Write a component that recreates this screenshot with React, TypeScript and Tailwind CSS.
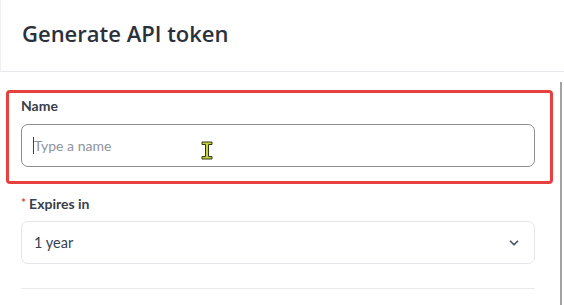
import React from 'react';

const titleFont = { fontFamily: '"Open Sans", "Noto Sans", sans-serif' };
const bodyFont = { fontFamily: 'Lato, "Open Sans", sans-serif' };

const Chevron: React.FC = () => (
  <svg width="14" height="14" viewBox="0 0 24 24" fill="none" stroke="#4b5563" strokeWidth="3" strokeLinecap="round" strokeLinejoin="round">
    <path d="M6 9l6 6 6-6" />
  </svg>
);

const IBeam: React.FC = () => (
  <svg width="12" height="19" viewBox="0 0 12 19">
    <path d="M1 1h10v2.5H7.5v12H11V18H1v-2.5h3.5v-12H1z" fill="#c5cf3f" stroke="#2f3a12" strokeWidth="1" strokeLinejoin="round" />
  </svg>
);

export default function App() {
  return (
    <div className="relative w-[564px] h-[305px] overflow-hidden bg-white text-[#374151]" style={bodyFont}>
      <div className="h-[72px] flex items-center px-[21px] border-b border-[#e5e7eb] border-l border-l-[#f1f1f1]">
        <h1 className="text-[22px] font-semibold text-[#2b313b] -mt-[4px]" style={titleFont}>Generate API token</h1>
      </div>

      <div className="flex h-[233px]">
        <div className="flex-1 pl-[21px] pr-[25px] pt-[24px] flex flex-col">
          <label className="text-[14px] leading-[20px] font-bold text-[#3a404a]">Name</label>
          <div className="relative mt-[8px] h-[43px] rounded-[7px] border border-[#8c8c8c] flex items-center pl-[11px]">
            <span className="w-px h-[17px] bg-[#444]" />
            <span className="text-[14px] text-[#8e949c]">Type a name</span>
            <div className="absolute left-[179px] top-[16px]">
              <IBeam />
            </div>
          </div>

          <label className="mt-[26px] text-[14px] leading-[20px] font-bold text-[#3a404a]">
            <span className="text-[#dc4d2c] text-[12px] mr-[3px] align-[2px]">*</span>Expires in
          </label>
          <div className="mt-[7px] h-[43px] rounded-[7px] border border-[#e3e5e8] flex items-center justify-between pl-[12px] pr-[13px]">
            <span className="text-[14.5px] text-[#374151]">1 year</span>
            <Chevron />
          </div>

          <div className="mt-[24px] border-t border-[#e8e9eb]" />
        </div>
        <div className="w-[4px] mt-[10px] border-l-2 border-[#a3a3a3]" />
      </div>

      <div className="absolute left-[6px] top-[90px] w-[547px] h-[94px] rounded-[4px] border-[3px] border-[#e8403f] pointer-events-none" />
    </div>
  );
}
